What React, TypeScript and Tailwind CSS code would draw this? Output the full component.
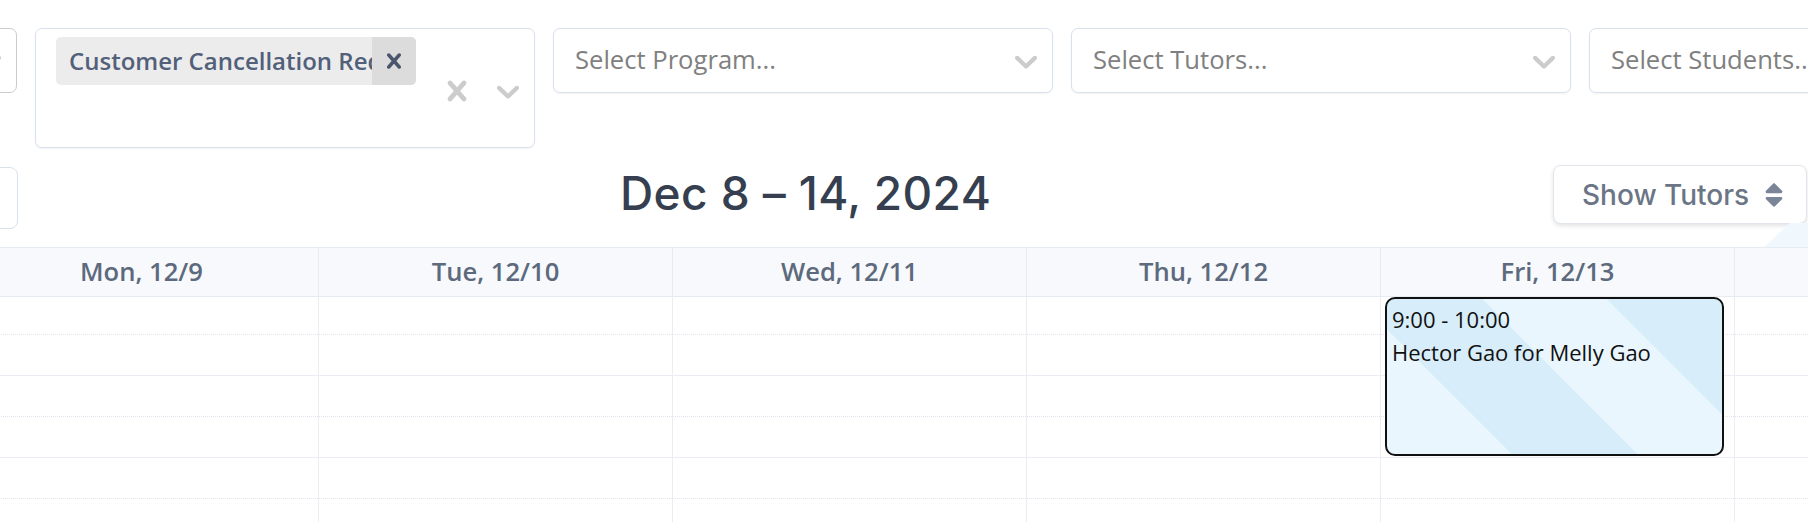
import { FaSort } from "react-icons/fa";

const Chevron = ({ className = "" }: { className?: string }) => (
  <svg viewBox="0 0 20 20" className={className} fill="currentColor">
    <path d="M4.516 7.548c0.436-0.446 1.043-0.481 1.576 0l3.908 3.747 3.908-3.747c0.533-0.481 1.141-0.446 1.574 0 0.436 0.445 0.408 1.197 0 1.615-0.406 0.418-4.695 4.502-4.695 4.502-0.217 0.223-0.502 0.335-0.787 0.335s-0.57-0.112-0.789-0.335c0 0-4.287-4.084-4.695-4.502s-0.436-1.17 0-1.615z" />
  </svg>
);

const Cross = ({ className = "" }: { className?: string }) => (
  <svg viewBox="0 0 20 20" className={className} fill="currentColor">
    <path d="M14.348 14.849c-0.469 0.469-1.229 0.469-1.697 0l-2.651-3.030-2.651 3.029c-0.469 0.469-1.229 0.469-1.697 0-0.469-0.469-0.469-1.229 0-1.697l2.758-3.15-2.759-3.152c-0.469-0.469-0.469-1.228 0-1.697s1.228-0.469 1.697 0l2.652 3.031 2.651-3.031c0.469-0.469 1.228-0.469 1.697 0s0.469 1.229 0 1.697l-2.758 3.152 2.758 3.15c0.469 0.469 0.469 1.229 0 1.698z" />
  </svg>
);

function SelectBox({ placeholder, gray }: { placeholder?: string; gray?: boolean }) {
  return (
    <div
      className={`flex items-center w-[500px] h-[65px] shrink-0 rounded-[7px] bg-white border ${
        gray ? "border-[#cccccc]" : "border-[#d8e1ee] shadow-[0_1px_2px_rgba(15,23,42,0.05)]"
      }`}
    >
      <div className="flex-1 min-w-0 pl-[21px] text-[25.6px] text-[#808080] whitespace-nowrap overflow-hidden">
        {placeholder}
      </div>
      <Chevron className="w-[38px] h-[38px] mr-[7px] text-[#cccccc] shrink-0" />
    </div>
  );
}

const days = ["Mon, 12/9", "Tue, 12/10", "Wed, 12/11", "Thu, 12/12", "Fri, 12/13", ""];

export default function App() {
  return (
    <div className="relative w-[1808px] h-[522px] overflow-hidden bg-white font-['Open_Sans',sans-serif]">
      {/* filters */}
      <div className="flex items-start gap-[18px] ml-[-483px] pt-[28px]">
        <SelectBox gray />
        <div className="flex items-center w-[500px] h-[120px] shrink-0 rounded-[7px] bg-white border border-[#d8e1ee] shadow-[0_1px_2px_rgba(15,23,42,0.05)]">
          <div className="flex-1 self-start pt-[8px] pl-[20px]">
            <div className="flex w-[360px] h-[48px] rounded-[5px] bg-[#ececec] overflow-hidden">
              <div className="flex items-center flex-1 min-w-0 pl-[13px] text-[24px] font-semibold text-[#52607a] whitespace-nowrap overflow-hidden">
                Customer Cancellation Request
              </div>
              <div className="flex items-center justify-center w-[44px] bg-[#dcdcdc] text-[#4a566b]">
                <Cross className="w-[30px] h-[30px]" />
              </div>
            </div>
          </div>
          <Cross className="w-[40px] h-[40px] text-[#cccccc] shrink-0 mt-[6px]" />
          <Chevron className="w-[38px] h-[38px] ml-[12px] mr-[7px] mt-[6px] text-[#cccccc] shrink-0" />
        </div>
        <SelectBox placeholder="Select Program..." />
        <SelectBox placeholder="Select Tutors..." />
        <SelectBox placeholder="Select Students..." />
      </div>

      {/* toolbar */}
      <div className="relative flex items-start mt-[17px] h-[82px]">
        <div className="w-[200px] h-[62px] ml-[-182px] mt-[2px] rounded-[8px] border border-[#d8e1ee] shrink-0" />
        <h1 className="ml-[602px] mt-[5px] font-['Inter',sans-serif] font-medium text-[46px] leading-none text-[#353f4f] tracking-[0.4px] whitespace-nowrap">
          Dec 8 – 14, 2024
        </h1>
        <button className="ml-auto mr-[1px] flex items-center h-[59px] w-[254px] pl-[28px] rounded-[8px] border border-[#e3e6ec] bg-white shadow-[0_2px_4px_rgba(15,23,42,0.12)] font-['Inter',sans-serif] font-medium text-[28px] text-[#6b7586]">
          Show Tutors
          <FaSort className="w-[30px] h-[30px] ml-[10px] text-[#7b8598]" />
        </button>
        <svg className="absolute right-0 top-[58px] w-[44px] h-[24px]" viewBox="0 0 44 24">
          <polygon points="0,24 26,0 44,0 44,24" fill="#f0f8fd" />
        </svg>
      </div>

      {/* calendar */}
      <div className="flex ml-[-35px] h-[50px] bg-[#f7f9fc] border-y border-[#e7ebf2]">
        {days.map((d, i) => (
          <div
            key={i}
            className="flex items-center justify-center w-[354px] shrink-0 border-r border-[#e7ebf2] text-[25.6px] font-semibold text-[#5d6a7d]"
          >
            {d}
          </div>
        ))}
      </div>
      <div className="h-[230px] overflow-hidden">
        <div className="flex ml-[-35px] -mt-[3px]">
          {days.map((d, i) => (
            <div key={i} className="relative w-[354px] shrink-0 border-r border-[#eaedf3]">
              {[0, 1, 2, 3].map((h) => (
                <div key={h}>
                  <div className="h-[41px] border-b border-dotted border-[#e1e6ee]" />
                  <div className="h-[41px] border-b border-[#eaedf3]" />
                </div>
              ))}
              {i === 4 && (
                <div className="absolute left-[4px] right-[10px] top-[3px] h-[159px] rounded-[10px] border-2 border-[#111] bg-[repeating-linear-gradient(45deg,#e9f6fd_0_88px,#d7edf9_88px_177px)] pl-[5px] pt-[4px] text-[22px] leading-[33px] text-[#111]">
                  <div>9:00 - 10:00</div>
                  <div>Hector Gao for Melly Gao</div>
                </div>
              )}
            </div>
          ))}
        </div>
      </div>
    </div>
  );
}
